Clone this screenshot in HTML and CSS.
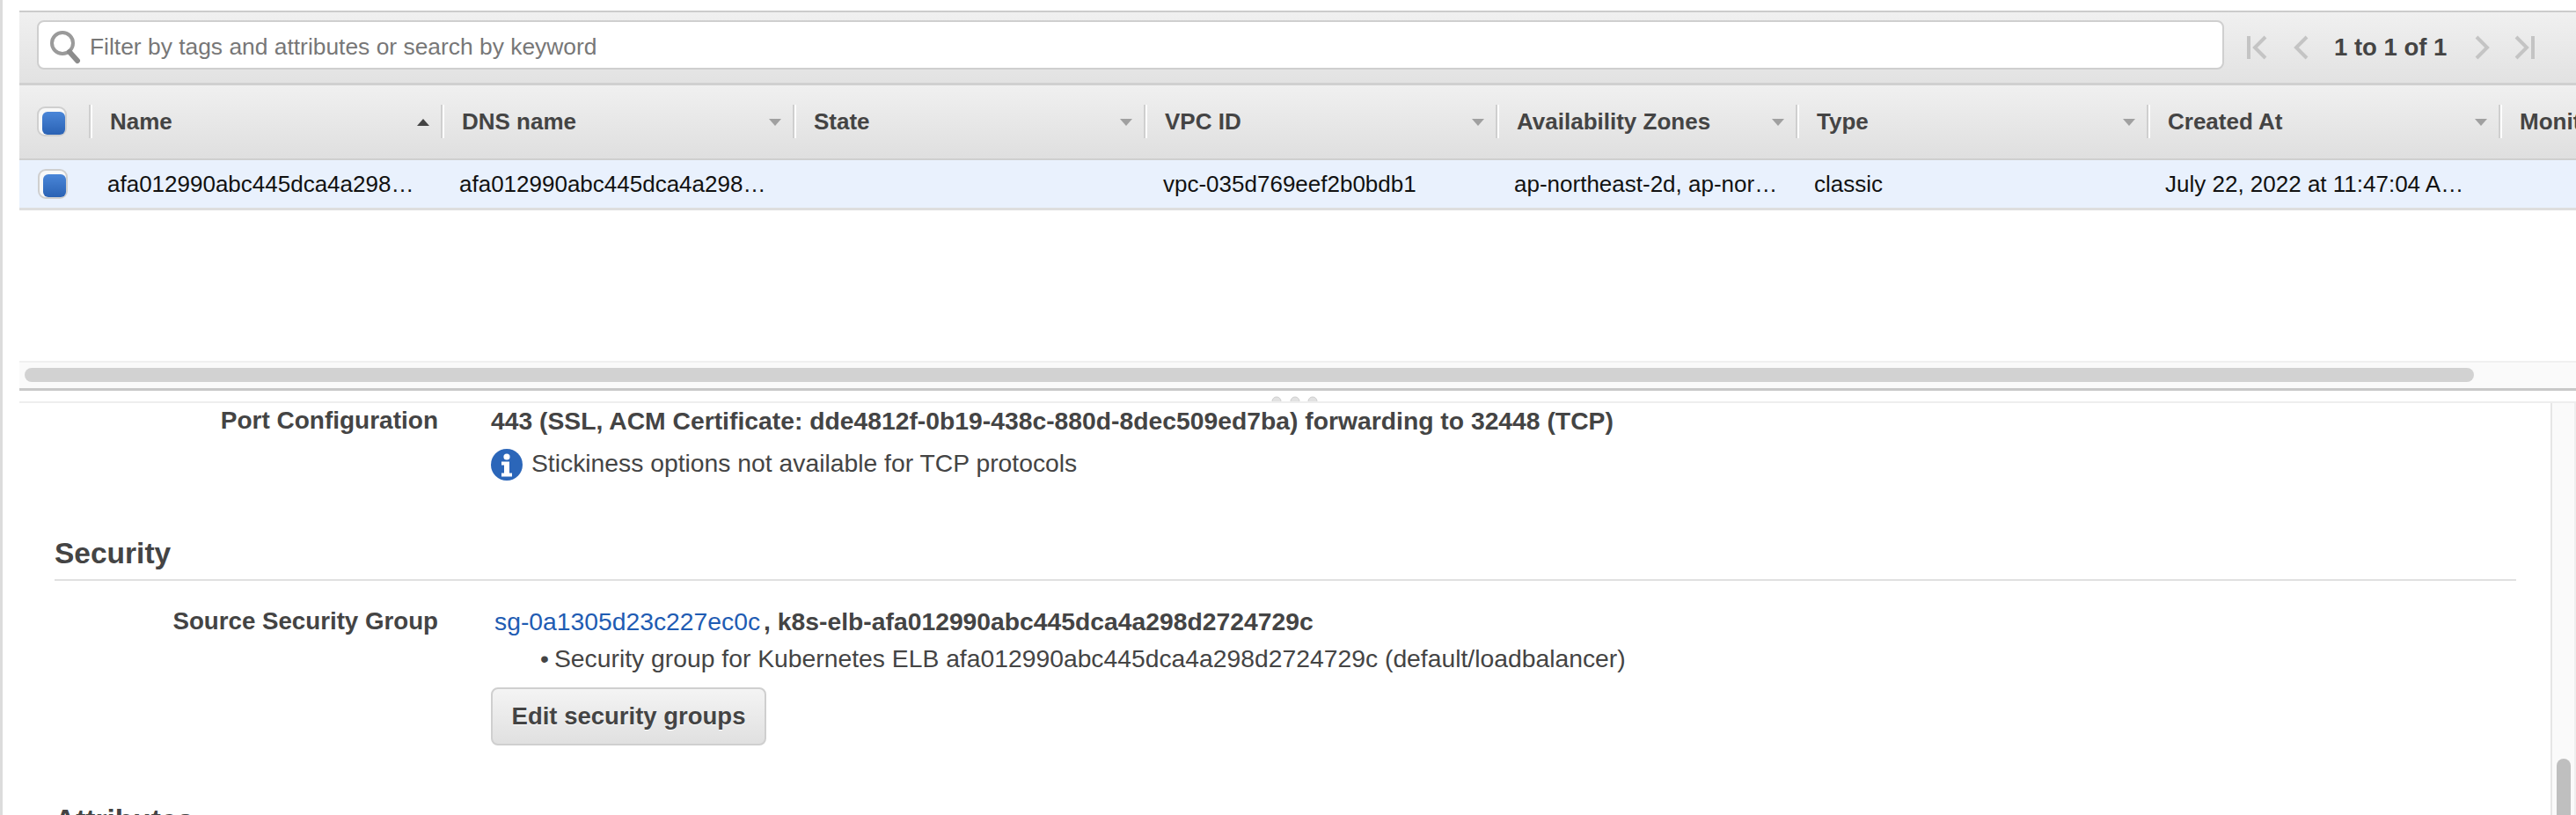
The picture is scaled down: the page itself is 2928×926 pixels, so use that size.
FILE: index.html
```html
<!DOCTYPE html>
<html lang="en">
<head>
<meta charset="utf-8">
<title>Load balancers</title>
<link rel="stylesheet" href="styles.css">
</head>
<body>
<div class="page">
  <section class="list">
    <div class="toolbar">
      <div class="search">
        <svg class="search-icon" viewBox="0 0 36 40" width="36" height="40"><circle cx="15" cy="16" r="12" fill="none" stroke="#9a9a9a" stroke-width="4"/><path d="M23 26l9 10" stroke="#8c8c8c" stroke-width="6" stroke-linecap="round"/></svg>
        <span class="placeholder">Filter by tags and attributes or search by keyword</span>
      </div>
      <nav class="pager">
        <svg class="pg" width="24" height="28" viewBox="0 0 24 28"><path d="M2 1v26" stroke="#c4c4c4" stroke-width="4" fill="none"/><path d="M21 2L9 14l12 12" stroke="#c4c4c4" stroke-width="4" fill="none"/></svg>
        <svg class="pg pg-prev" width="18" height="28" viewBox="0 0 18 28"><path d="M16 2L4 14l12 12" stroke="#c4c4c4" stroke-width="4" fill="none"/></svg>
        <span class="pg-text">1 to 1 of 1</span>
        <svg class="pg pg-next" width="18" height="28" viewBox="0 0 18 28"><path d="M2 2l12 12L2 26" stroke="#c4c4c4" stroke-width="4" fill="none"/></svg>
        <svg class="pg" width="24" height="28" viewBox="0 0 24 28"><path d="M3 2l12 12L3 26" stroke="#c4c4c4" stroke-width="4" fill="none"/><path d="M22 1v26" stroke="#c4c4c4" stroke-width="4" fill="none"/></svg>
      </nav>
    </div>
    <div class="grid head">
      <div class="cell-check"><span class="check"></span></div>
      <div class="th"><span>Name</span><i class="tri tri-up"></i></div>
      <div class="th"><span>DNS name</span><i class="tri"></i></div>
      <div class="th"><span>State</span><i class="tri"></i></div>
      <div class="th"><span>VPC ID</span><i class="tri"></i></div>
      <div class="th"><span>Availability Zones</span><i class="tri"></i></div>
      <div class="th"><span>Type</span><i class="tri"></i></div>
      <div class="th"><span>Created At</span><i class="tri"></i></div>
      <div class="th"><span>Monitoring</span></div>
    </div>
    <div class="grid row">
      <div class="cell-check"><span class="check check-row"></span></div>
      <div class="td td-clip">afa012990abc445dca4a298d2724729c</div>
      <div class="td td-clip">afa012990abc445dca4a298d2724729c-1234567890</div>
      <div class="td"></div>
      <div class="td td-vpc">vpc-035d769eef2b0bdb1</div>
      <div class="td">ap-northeast-2d, ap-northeast-2a</div>
      <div class="td">classic</div>
      <div class="td td-clip">July 22, 2022 at 11:47:04 AM UTC+9</div>
      <div class="td"></div>
    </div>
    <div class="list-space"></div>
    <div class="hscroll"><div class="hthumb"></div></div>
  </section>
  <div class="splitter">
    <svg width="56" height="12" viewBox="0 0 56 12"><g fill="#e2e2e2" stroke="#cfcfcf" stroke-width="1"><circle cx="7" cy="12" r="5"/><circle cx="28" cy="12" r="5"/><circle cx="48" cy="12" r="5"/></g></svg>
  </div>
  <section class="details">
    <div class="content">
      <div class="kv kv-port">
        <div class="k">Port Configuration</div>
        <div class="v">
          <div class="strong">443 (SSL, ACM Certificate: dde4812f-0b19-438c-880d-8dec509ed7ba) forwarding to 32448 (TCP)</div>
          <div class="note">
            <svg width="36" height="36" viewBox="0 0 36 36"><circle cx="18" cy="18" r="18" fill="#2b66b9"/><circle cx="18" cy="9" r="3.6" fill="#fff"/><path d="M12 14.500h9v13h3v4H12v-4h3v-9h-3z" fill="#fff"/></svg>
            <span>Stickiness options not available for TCP protocols</span>
          </div>
        </div>
      </div>
      <h2 class="heading">Security</h2>
      <div class="kv kv-sg">
        <div class="k">Source Security Group</div>
        <div class="v">
          <div class="sg-line"><a class="link" href="#">sg-0a1305d23c227ec0c</a><span class="comma">,</span> <span class="strong">k8s-elb-afa012990abc445dca4a298d2724729c</span></div>
          <ul class="sg-list"><li>Security group for Kubernetes ELB afa012990abc445dca4a298d2724729c (default/loadbalancer)</li></ul>
          <button class="btn" type="button">Edit security groups</button>
        </div>
      </div>
      <h2 class="heading heading-attr">Attributes</h2>
    </div>
    <div class="vscroll"><div class="vthumb"></div></div>
  </section>
</div>
</body>
</html>
```
FILE: styles.css
```css
* { box-sizing: border-box; }
html, body { margin: 0; padding: 0; background: #fff; }
body { width: 2928px; height: 926px; overflow: hidden; font-family: "Liberation Sans", Arial, sans-serif; font-size: 28px; color: #444; }
.page { height: 926px; border-left: 3px solid #dcdcdc; display: flex; flex-direction: column; overflow: hidden; }

.list { margin-left: 19px; padding-top: 12px; height: 444px; display: flex; flex-direction: column; flex: none; }

.toolbar { height: 85px; flex: none; border-top: 2px solid #ccc; border-bottom: 3px solid #d0d0d0; background: linear-gradient(#f0f0f0, #e2e2e2); display: flex; align-items: flex-start; padding: 9px 0 0 20px; }
.search { width: 2486px; height: 56px; flex: none; background: #fff; border: 2px solid #cfcfcf; border-radius: 8px; display: flex; align-items: center; padding: 3px 0 0 12px; }
.search-icon { flex: none; margin-right: 10px; }
.placeholder { color: #777; font-size: 26.4px; margin-top: 2px; }
.pager { display: flex; align-items: center; margin-left: 26px; height: 56px; padding-top: 5px; }
.pg { flex: none; }
.pg-prev { margin-left: 28px; }
.pg-text { margin: 0 32px 0 29px; font-weight: 700; font-size: 27.5px; color: #444; white-space: nowrap; }
.pg-next { margin-right: 26px; }

.grid { display: grid; grid-template-columns: 79px 400px 400px 399px 400px 341px 399px 400px 200px; flex: none; overflow: hidden; }
.head { height: 85px; border-bottom: 2px solid #cfcfcf; background: linear-gradient(#f0f0f0, #dfdfdf); align-items: center; }
.row { height: 57px; border-bottom: 3px solid #dedede; background: #e9f1fd; align-items: center; }

.cell-check { height: 100%; display: flex; align-items: center; padding-left: 20px; }
.head .cell-check { padding-bottom: 1px; }
.check { display: block; width: 34px; height: 34px; border: 2px solid #cfcfcf; border-radius: 9px; background: #f8f8f8; position: relative; }
.check::after { content: ""; position: absolute; left: 4px; top: 4px; width: 26px; height: 26px; border-radius: 6px; background: linear-gradient(#4a86d8, #2a62b4); }
.check-row { margin-left: 1px; }

.th { height: 38px; margin-bottom: 2px; border-left: 2px solid #cfcfcf; box-shadow: inset 2px 0 0 #fff; padding: 2px 13px 0 22px; display: flex; align-items: center; justify-content: space-between; font-weight: 700; font-size: 26px; color: #444; white-space: nowrap; overflow: hidden; }
.th:last-child { overflow: visible; }
.tri { display: block; width: 0; height: 0; border-left: 7px solid transparent; border-right: 7px solid transparent; border-top: 8px solid #a0a0a0; }
.tri-up { border-top: 0; border-bottom: 8px solid #444; }

.td { padding: 0 16px 0 21px; font-size: 26px; color: #111; white-space: nowrap; overflow: hidden; text-overflow: ellipsis; }
.td-clip { padding-right: 24px; }
.td-vpc { padding-left: 22px; }

.list-space { flex: 1; min-height: 0; border-bottom: 2px solid #f0f0f0; }
.hscroll { height: 32px; flex: none; background: #fafafa; border-bottom: 3px solid #c8c8c8; padding: 6px 0 0 6px; }
.hthumb { width: 2784px; height: 16px; border-radius: 8px; background: #d2d2d2; }

.splitter { height: 12px; margin-left: 19px; flex: none; display: flex; justify-content: center; overflow: hidden; padding-right: 6px; }

.details { flex: 1; min-height: 0; margin-left: 19px; border-top: 2px solid #eee; display: flex; overflow: hidden; }
.content { flex: 1; min-width: 0; padding: 0 39px 0 40px; overflow: hidden; }
.vscroll { width: 29px; flex: none; background: #fafafa; border-left: 2px solid #e6e6e6; border-right: 2px solid #eee; padding: 404px 0 0 5px; }
.vthumb { width: 16px; height: 100px; border-radius: 8px; background: #bfbfbf; }

.kv { display: grid; grid-template-columns: 436px 1fr; column-gap: 60px; line-height: 30px; }
.k { text-align: right; font-weight: 700; color: #444; }
.kv-sg .k { font-size: 27.7px; }
.v { font-size: 28.3px; }
.strong { font-weight: 700; color: #444; }
.kv-port { padding-top: 5px; }
.note { display: flex; align-items: center; gap: 10px; margin-top: 17px; color: #444; }
.note svg { flex: none; }
.note span { margin-top: -5px; }

.heading { margin: 0; font-size: 33.5px; font-weight: 700; line-height: 38px; color: #444; }
.kv-port + .heading { margin-top: 64px; padding-bottom: 10px; border-bottom: 2px solid #e0e0e0; }
.kv-sg { padding-top: 31px; }

.sg-line { padding-left: 4px; white-space: nowrap; }
.link { color: #1f5cb3; text-decoration: none; }
.comma { font-weight: 700; margin-left: 4px; }
.sg-list { margin: 12px 0 0; padding: 0 0 0 72px; list-style: none; }
.sg-list li { position: relative; }
.sg-list li::before { content: "\2022"; position: absolute; left: -16px; }
.btn { display: block; margin: 18px 0 0 0; width: 313px; height: 66px; border: 2px solid #cfcfcf; border-radius: 8px; background: linear-gradient(#f4f4f4, #e0e0e0); font: 700 27.5px "Liberation Sans", Arial, sans-serif; color: #444; text-shadow: 0 1px 0 #fff; padding: 0; }
.heading-attr { margin-top: 66px; }
```
